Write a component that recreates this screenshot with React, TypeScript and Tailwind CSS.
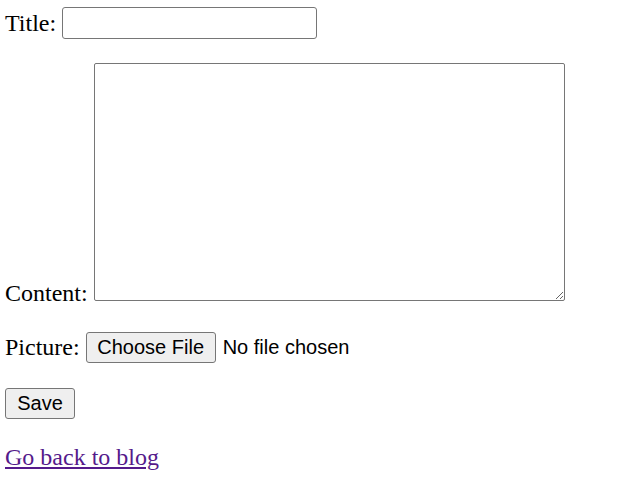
export default function App() {
  return (
    <div className="min-h-screen bg-white pl-[5px] pt-[7px] text-[24px] text-black font-['Liberation_Serif',serif]">
      <div className="flex items-center gap-[6px]">
        <label className="leading-[32px]">Title:</label>
        <input
          type="text"
          className="h-[32px] w-[255px] rounded-[3px] border border-[#767676] bg-white px-1 outline-none"
        />
      </div>

      <div className="mt-[24px] flex items-end gap-[6px]">
        <label className="mb-[-6px] leading-[27px]">Content:</label>
        <textarea className="h-[238px] w-[471px] resize rounded-[2px] border border-[#767676] bg-white outline-none" />
      </div>

      <div className="mt-[31px] flex items-center">
        <label className="leading-[31px]">Picture:</label>
        <button
          type="button"
          className="ml-[6px] h-[31px] w-[130px] rounded-[3px] border border-[#767676] bg-[#efefef] pb-[1px] text-[20px] leading-none font-['Liberation_Sans',sans-serif]"
        >
          Choose File
        </button>
        <span className="ml-[7px] pb-[1px] text-[20px] font-['Liberation_Sans',sans-serif]">No file chosen</span>
      </div>

      <div className="mt-[25px] flex">
        <button
          type="button"
          className="h-[31px] w-[70px] rounded-[3px] border border-[#767676] bg-[#efefef] pb-[1px] text-[20px] leading-none font-['Liberation_Sans',sans-serif]"
        >
          Save
        </button>
      </div>

      <div className="mt-[20px]">
        <a href="#" className="text-[#551a8b] underline leading-[27px]">
          Go back to blog
        </a>
      </div>
    </div>
  );
}
